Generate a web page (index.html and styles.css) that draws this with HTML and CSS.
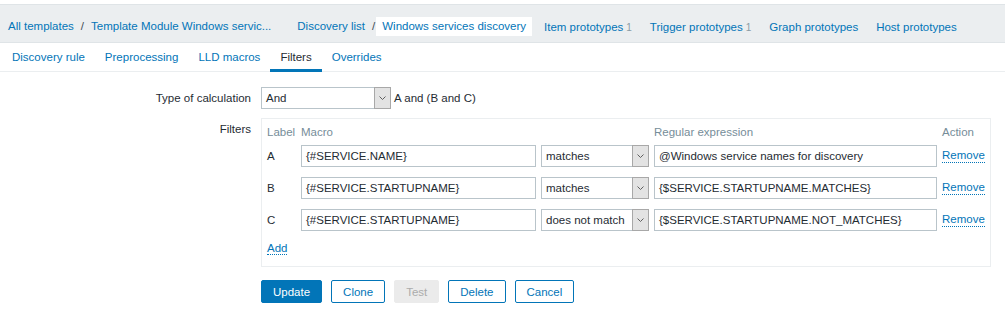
FILE: index.html
```html
<!DOCTYPE html>
<html lang="en">
<head>
    <meta charset="UTF-8">
    <title>Windows services discovery</title>
    <link rel="stylesheet" href="styles.css">
</head>
<body>
    <nav class="header-nav">
        <ul class="crumbs">
            <li><a href="#">All templates</a></li>
            <li class="sep">/</li>
            <li><a href="#">Template Module Windows servic...</a></li>
        </ul>
        <ul class="crumbs">
            <li><a href="#">Discovery list</a></li>
            <li class="sep">/</li>
            <li class="current"><a href="#">Windows services discovery</a></li>
        </ul>
        <ul class="links">
            <li><a href="#">Item prototypes</a><span class="count">1</span></li>
            <li><a href="#">Trigger prototypes</a><span class="count">1</span></li>
            <li><a href="#">Graph prototypes</a></li>
            <li><a href="#">Host prototypes</a></li>
        </ul>
    </nav>

    <ul class="tabs">
        <li><a href="#">Discovery rule</a></li>
        <li><a href="#">Preprocessing</a></li>
        <li><a href="#">LLD macros</a></li>
        <li class="active"><a href="#">Filters</a></li>
        <li><a href="#">Overrides</a></li>
    </ul>

    <form class="form">
        <div class="form-row">
            <label class="form-label">Type of calculation</label>
            <div class="form-field">
                <div class="select select-calc">
                    <span class="select-value">And</span>
                    <span class="select-btn"><svg width="7" height="4" viewBox="0 0 7 4"><polyline points="0.5,0.5 3.5,3.5 6.5,0.5" fill="none" stroke="#5f5f5f" stroke-width="1"/></svg></span>
                </div>
                <span class="calc-expr">A and (B and C)</span>
            </div>
        </div>

        <div class="form-row filters-row">
            <label class="form-label">Filters</label>
            <div class="filter-box">
                <div class="filter-head">
                    <span>Label</span>
                    <span>Macro</span>
                    <span></span>
                    <span>Regular expression</span>
                    <span>Action</span>
                </div>

                <div class="filter-row">
                    <span>A</span>
                    <div class="text-input">{#SERVICE.NAME}</div>
                    <div class="select">
                        <span class="select-value">matches</span>
                        <span class="select-btn"><svg width="7" height="4" viewBox="0 0 7 4"><polyline points="0.5,0.5 3.5,3.5 6.5,0.5" fill="none" stroke="#5f5f5f" stroke-width="1"/></svg></span>
                    </div>
                    <div class="text-input">@Windows service names for discovery</div>
                    <a href="#" class="dotted">Remove</a>
                </div>

                <div class="filter-row">
                    <span>B</span>
                    <div class="text-input">{#SERVICE.STARTUPNAME}</div>
                    <div class="select">
                        <span class="select-value">matches</span>
                        <span class="select-btn"><svg width="7" height="4" viewBox="0 0 7 4"><polyline points="0.5,0.5 3.5,3.5 6.5,0.5" fill="none" stroke="#5f5f5f" stroke-width="1"/></svg></span>
                    </div>
                    <div class="text-input">{$SERVICE.STARTUPNAME.MATCHES}</div>
                    <a href="#" class="dotted">Remove</a>
                </div>

                <div class="filter-row">
                    <span>C</span>
                    <div class="text-input">{#SERVICE.STARTUPNAME}</div>
                    <div class="select">
                        <span class="select-value">does not match</span>
                        <span class="select-btn"><svg width="7" height="4" viewBox="0 0 7 4"><polyline points="0.5,0.5 3.5,3.5 6.5,0.5" fill="none" stroke="#5f5f5f" stroke-width="1"/></svg></span>
                    </div>
                    <div class="text-input">{$SERVICE.STARTUPNAME.NOT_MATCHES}</div>
                    <a href="#" class="dotted">Remove</a>
                </div>

                <div class="filter-add">
                    <a href="#" class="dotted">Add</a>
                </div>
            </div>
        </div>

        <div class="form-row actions-row">
            <span></span>
            <div class="actions">
                <button type="button" class="btn btn-primary">Update</button>
                <button type="button" class="btn">Clone</button>
                <button type="button" class="btn" disabled>Test</button>
                <button type="button" class="btn">Delete</button>
                <button type="button" class="btn">Cancel</button>
            </div>
        </div>
    </form>
</body>
</html>
```

FILE: styles.css
```css
:root {
    --blue: #0275b8;
    --text: #1f2c33;
    --muted: #768d99;
    --line: #ebeef0;
    --field: #b9c4ca;
}

* {
    box-sizing: border-box;
    margin: 0;
    padding: 0;
}

body {
    font-family: "Liberation Sans", Arial, sans-serif;
    font-size: 11.5px;
    color: var(--text);
    background: #fff;
}

a {
    color: var(--blue);
    text-decoration: none;
}

ul {
    list-style: none;
}

/* breadcrumbs + prototype links */
.header-nav {
    margin-top: 4px;
    height: 39px;
    padding: 6px 0 0 2px;
    display: flex;
    align-items: center;
    background: #ebeef0;
    border-top: 1px solid #dfe4e7;
    border-bottom: 1px solid #dfe4e7;
}

.crumbs {
    display: flex;
    align-items: center;
}

.crumbs li {
    padding: 0 6px;
    line-height: 19px;
    white-space: nowrap;
}

.crumbs .sep {
    padding: 0 1px;
    color: #3d4a52;
}

.crumbs + .crumbs {
    margin-left: 14px;
}

.crumbs .current {
    background: #fff;
}

.links {
    display: flex;
    margin-left: 3px;
}

.links li {
    padding: 0 9px;
    white-space: nowrap;
}

.count {
    margin-left: 3px;
    font-size: 10px;
    color: #8b9ca5;
}

/* tabs */
.tabs {
    display: flex;
    height: 29px;
    padding-left: 2px;
    border-bottom: 1px solid var(--line);
}

.tabs li {
    height: 29px;
}

.tabs a {
    display: block;
    height: 29px;
    padding: 0 10px;
    line-height: 28px;
}

.tabs .active a {
    color: var(--text);
    box-shadow: inset 0 -3px 0 var(--blue);
}

/* form */
.form {
    padding-top: 15px;
}

.form-row {
    display: grid;
    grid-template-columns: 251px 1fr;
    column-gap: 10px;
    align-items: start;
}

.form-label {
    text-align: right;
    line-height: 22px;
}

.form-field {
    display: flex;
    align-items: center;
}

.calc-expr {
    margin-left: 3px;
}

.select {
    display: flex;
    height: 22px;
    border: 1px solid var(--field);
    background: #fff;
}

.select-calc {
    width: 130px;
}

.select-value {
    flex: 1;
    padding-left: 4px;
    line-height: 20px;
    white-space: nowrap;
    overflow: hidden;
}

.select-btn {
    width: 17px;
    margin: -1px -1px -1px 0;
    display: flex;
    align-items: center;
    justify-content: center;
    background: #e3e3e3;
    border: 1px solid #a8a8a8;
}

.filters-row {
    margin-top: 9px;
}

.filters-row .form-label {
    padding-top: 4px;
    line-height: 14px;
}

.filter-box {
    width: 730px;
    padding: 5px 0 11px 5px;
    border: 1px solid var(--line);
}

.filter-head,
.filter-row {
    display: grid;
    grid-template-columns: 29px 235px 108px 283px auto;
    column-gap: 5px;
    align-items: center;
}

.filter-head {
    height: 16px;
    line-height: 16px;
    color: var(--muted);
}

.filter-row {
    padding: 5px 0;
}

.text-input {
    height: 22px;
    padding: 0 4px;
    line-height: 20px;
    border: 1px solid var(--field);
    white-space: nowrap;
    overflow: hidden;
}

.dotted {
    justify-self: start;
    line-height: 13px;
    border-bottom: 1px dotted var(--blue);
}

.filter-add {
    padding-top: 5px;
    line-height: 14px;
}

.actions-row {
    margin-top: 13px;
}

.actions {
    display: flex;
    gap: 9px;
}

.btn {
    height: 23px;
    padding: 0 11px;
    font: inherit;
    color: var(--blue);
    background: #fff;
    border: 1px solid var(--blue);
    border-radius: 2px;
}

.btn-primary {
    color: #fff;
    background: var(--blue);
}

.btn:disabled {
    color: #acacac;
    background: #ebebeb;
    border-color: #ebebeb;
}
```
